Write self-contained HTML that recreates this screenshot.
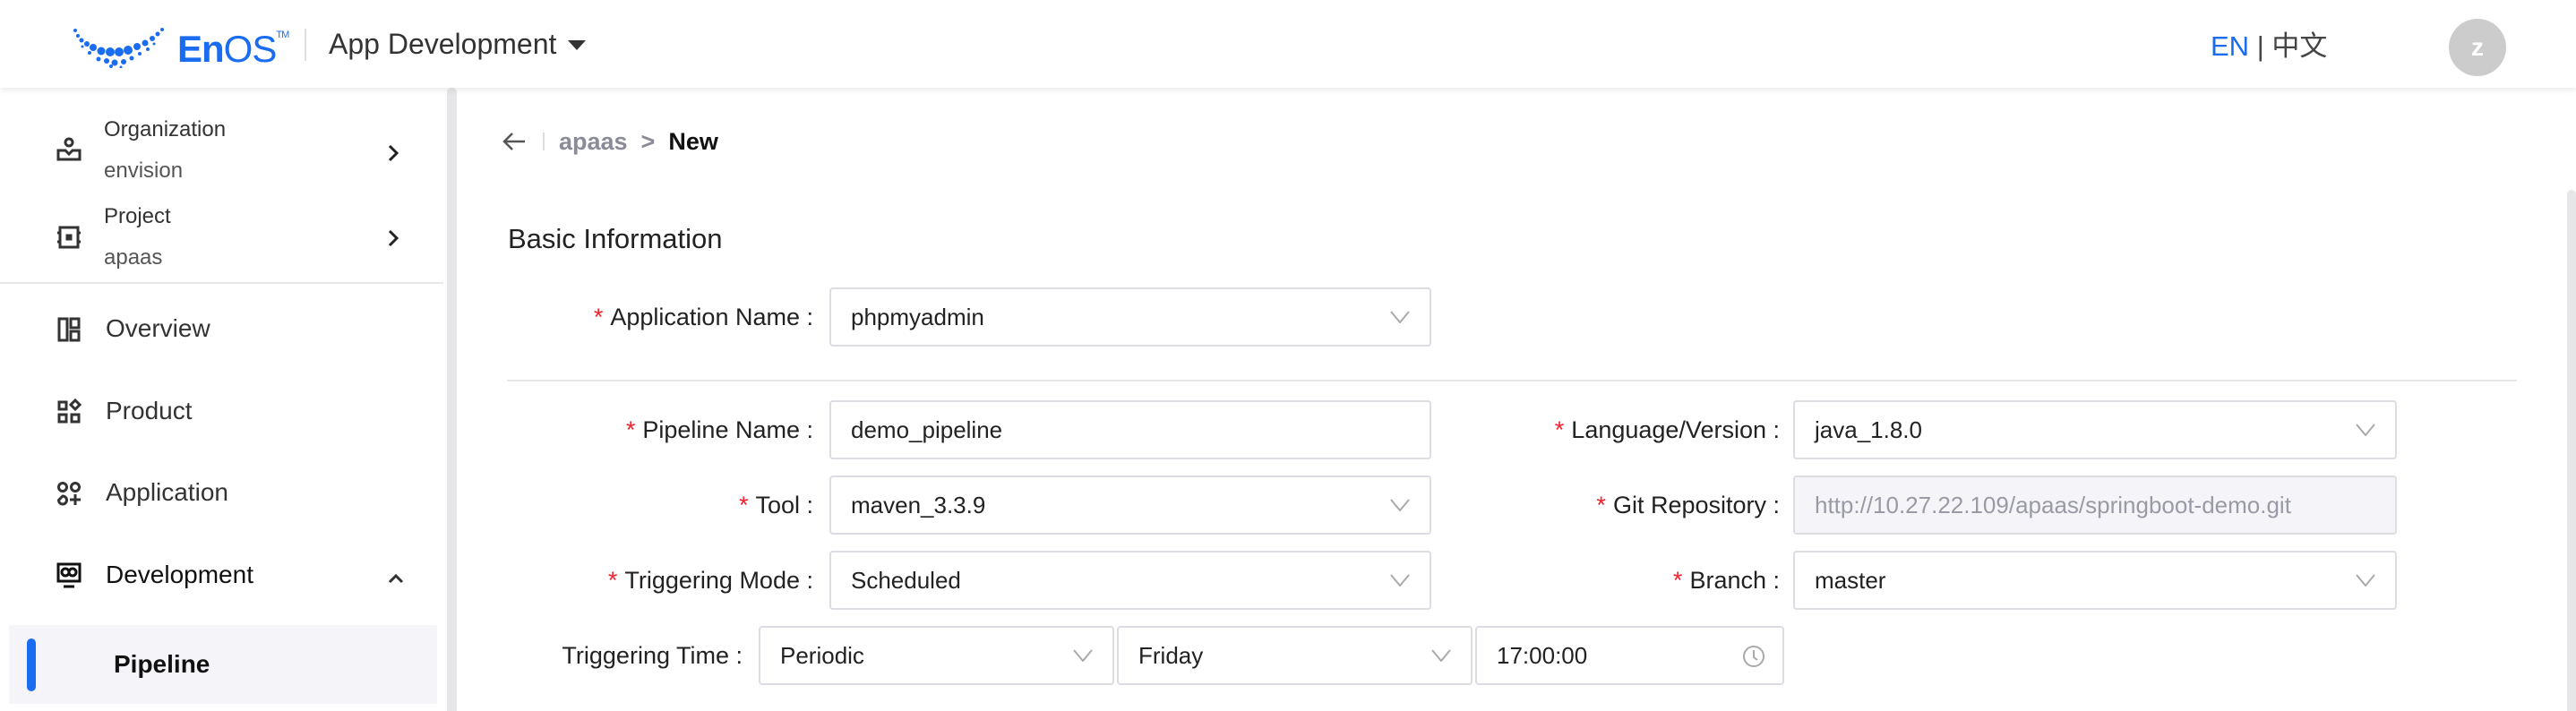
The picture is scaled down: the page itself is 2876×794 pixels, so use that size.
<!DOCTYPE html>
<html><head><meta charset="utf-8"><style>
*{margin:0;padding:0;box-sizing:border-box}
body{width:2876px;height:794px;overflow:hidden;background:#fff;font-family:"Liberation Sans","Noto Sans CJK SC",sans-serif;color:#222;position:relative}
.abs{position:absolute}
#hdr{left:0;top:0;width:2876px;height:98px;background:#fff;box-shadow:0 3px 6px rgba(0,0,0,.08);z-index:5}
#side{left:0;top:98px;width:498px;height:696px;background:#fff}
#sb{left:499px;top:98px;width:11px;height:696px;background:#e6e6e8;border-radius:5px 5px 0 0}
#sb2{left:2866px;top:212px;width:10px;height:582px;background:#e6e6e8;border-radius:5px 5px 0 0}
.t{position:absolute;white-space:nowrap;line-height:1}
.lbl{position:absolute;font-size:27px;line-height:1;white-space:nowrap;text-align:right;color:#222}
.lbl b{color:#f5222d;font-weight:normal;margin-right:8px}
.box{position:absolute;height:66px;border:2px solid #dcdce3;border-radius:4px;background:#fff;font-size:26px;line-height:62px;padding-left:22px;color:#222;white-space:nowrap}
.chev{position:absolute;right:22px;top:24px}
.si{position:absolute;left:62px}
</style></head><body>
<div id="hdr" class="abs">
  <svg class="abs" style="left:80px;top:30px" width="108" height="46" viewBox="0 0 108 46">
    <g fill="#1a6cf0">
      <circle cx="4" cy="4" r="2"/><circle cx="7" cy="10" r="2"/><circle cx="11" cy="15" r="2.5"/><circle cx="17" cy="19" r="3"/><circle cx="24" cy="23" r="4"/><circle cx="33" cy="27" r="4.5"/><circle cx="43" cy="28" r="5"/><circle cx="53" cy="28" r="5"/><circle cx="63" cy="26" r="5"/><circle cx="73" cy="22" r="4"/><circle cx="82" cy="18" r="3.5"/><circle cx="90" cy="13" r="3"/><circle cx="96" cy="8" r="2.5"/><circle cx="101" cy="3" r="2"/>
      <circle cx="30" cy="36" r="2.5"/><circle cx="39" cy="38" r="3"/><circle cx="48" cy="40" r="3.5"/><circle cx="58" cy="39" r="3"/><circle cx="67" cy="35" r="2.5"/><circle cx="76" cy="30" r="2"/><circle cx="85" cy="25" r="2"/><circle cx="20" cy="29" r="2"/><circle cx="44" cy="44" r="2"/><circle cx="55" cy="45" r="1.5"/><circle cx="12" cy="22" r="1.5"/><circle cx="92" cy="19" r="1.5"/>
    </g>
  </svg>
  <div class="t" style="left:198px;top:34px;font-size:42px;color:#1a6cf0;font-weight:bold;letter-spacing:-1px">En<span style="font-weight:normal">OS</span><span style="font-size:11px;vertical-align:top;font-weight:normal">TM</span></div>
  <div class="abs" style="left:340px;top:32px;width:2px;height:36px;background:#e0e0e0"></div>
  <div class="t" style="left:367px;top:33px;font-size:32px;color:#333">App Development</div>
  <svg class="abs" style="left:634px;top:45px" width="20" height="12"><path d="M0 0H20L10 11Z" fill="#333"/></svg>
  <div class="t" style="left:2468px;top:36px;font-size:31px;color:#444"><span style="color:#1a6cf0">EN</span> | 中文</div>
  <div class="abs" style="left:2734px;top:21px;width:64px;height:64px;border-radius:50%;background:#ccc;color:#fff;font-size:28px;line-height:64px;text-align:center;font-weight:bold">z</div>
</div>
<div id="side" class="abs">
  <svg class="si" style="top:54px" width="30" height="30" viewBox="0 0 30 30" fill="none" stroke="#333" stroke-width="3"><circle cx="15" cy="7" r="4"/><path d="M3 16h8l4 4 4-4h8v10H3z"/></svg>
  <div class="t" style="left:116px;top:35px;font-size:24px;color:#333">Organization</div>
  <div class="t" style="left:116px;top:81px;font-size:24px;color:#555">envision</div>
  <svg class="abs" style="left:432px;top:63px" width="14" height="20"><path d="M3 2l8 8-8 8" fill="none" stroke="#222" stroke-width="3"/></svg>
  <svg class="si" style="top:152px" width="30" height="30" viewBox="0 0 30 30" fill="none" stroke="#333" stroke-width="3"><rect x="5" y="4" width="20" height="22"/><rect x="13" y="13" width="4" height="4" fill="#333"/><path d="M2 10h3M2 20h3M25 10h3M25 20h3"/></svg>
  <div class="t" style="left:116px;top:132px;font-size:24px;color:#333">Project</div>
  <div class="t" style="left:116px;top:178px;font-size:24px;color:#555">apaas</div>
  <svg class="abs" style="left:432px;top:158px" width="14" height="20"><path d="M3 2l8 8-8 8" fill="none" stroke="#222" stroke-width="3"/></svg>
  <div class="abs" style="left:0;top:217px;width:495px;height:2px;background:#e8e8ea"></div>
  <svg class="si" style="top:255px" width="30" height="30" viewBox="0 0 30 30" fill="none" stroke="#333" stroke-width="3"><rect x="4" y="3" width="9" height="24"/><rect x="17" y="3" width="9" height="10"/><rect x="17" y="17" width="9" height="10"/></svg>
  <div class="t" style="left:118px;top:255px;font-size:28px;color:#333">Overview</div>
  <svg class="si" style="top:347px" width="30" height="30" viewBox="0 0 30 30" fill="none" stroke="#333" stroke-width="3"><rect x="4" y="4" width="8" height="8"/><rect x="4" y="18" width="8" height="8"/><rect x="18" y="18" width="8" height="8"/><path d="M22 2l5 5-5 5-5-5z"/></svg>
  <div class="t" style="left:118px;top:347px;font-size:28px;color:#333">Product</div>
  <svg class="si" style="top:438px" width="30" height="30" viewBox="0 0 30 30" fill="none" stroke="#333" stroke-width="3"><circle cx="8" cy="8" r="4.5"/><circle cx="22" cy="8" r="4.5"/><path d="M8 18a4.5 4.5 0 1 1 0 9a4.5 4.5 0 0 1-4.5-4.5z"/><path d="M22 16v12M16 22h12"/></svg>
  <div class="t" style="left:118px;top:438px;font-size:28px;color:#333">Application</div>
  <svg class="si" style="top:529px" width="30" height="32" viewBox="0 0 30 32" fill="none" stroke="#111" stroke-width="3"><rect x="3" y="3" width="24" height="19"/><circle cx="11" cy="12" r="4"/><circle cx="19" cy="12" r="4"/><path d="M9 28h12"/></svg>
  <div class="t" style="left:118px;top:530px;font-size:28px;color:#111">Development</div>
  <svg class="abs" style="left:433px;top:542px" width="18" height="12"><path d="M2 10l7-7 7 7" fill="none" stroke="#333" stroke-width="3"/></svg>
  <div class="abs" style="left:10px;top:600px;width:478px;height:88px;background:#f4f4f9"></div>
  <div class="abs" style="left:30px;top:615px;width:10px;height:59px;background:#1a6cf0;border-radius:5px"></div>
  <div class="t" style="left:127px;top:630px;font-size:28px;color:#111;font-weight:bold">Pipeline</div>
</div>
<div id="sb" class="abs"></div>
<div id="sb2" class="abs"></div>
<!-- content -->
<svg class="abs" style="left:560px;top:146px" width="28" height="24"><path d="M26 12H3M12 3L3 12l9 9" fill="none" stroke="#555" stroke-width="2.5"/></svg>
<div class="abs" style="left:606px;top:148px;width:2px;height:20px;background:#ddd"></div>
<div class="t" style="left:624px;top:145px;font-size:27px;color:#8a8a99;font-weight:bold">apaas&nbsp;&nbsp;&gt;&nbsp;&nbsp;<span style="color:#111">New</span></div>
<div class="t" style="left:567px;top:251px;font-size:31px;color:#222">Basic Information</div>

<div class="lbl" style="right:1968px;top:341px"><b>*</b>Application Name :</div>
<div class="box" style="left:926px;top:321px;width:672px">phpmyadmin<svg class="chev" width="22" height="14"><path d="M1 1l10 12 10-12" fill="none" stroke="#aaa" stroke-width="2"/></svg></div>

<div class="abs" style="left:566px;top:424px;width:2244px;height:2px;background:#e6e6e8"></div>

<div class="lbl" style="right:1968px;top:467px"><b>*</b>Pipeline Name :</div>
<div class="box" style="left:926px;top:447px;width:672px">demo_pipeline</div>
<div class="lbl" style="right:1968px;top:551px"><b>*</b>Tool :</div>
<div class="box" style="left:926px;top:531px;width:672px">maven_3.3.9<svg class="chev" width="22" height="14"><path d="M1 1l10 12 10-12" fill="none" stroke="#aaa" stroke-width="2"/></svg></div>
<div class="lbl" style="right:1968px;top:635px"><b>*</b>Triggering Mode :</div>
<div class="box" style="left:926px;top:615px;width:672px">Scheduled<svg class="chev" width="22" height="14"><path d="M1 1l10 12 10-12" fill="none" stroke="#aaa" stroke-width="2"/></svg></div>

<div class="lbl" style="right:2047px;top:719px">Triggering Time :</div>
<div class="box" style="left:847px;top:699px;width:397px">Periodic<svg class="chev" width="22" height="14"><path d="M1 1l10 12 10-12" fill="none" stroke="#aaa" stroke-width="2"/></svg></div>
<div class="box" style="left:1247px;top:699px;width:397px">Friday<svg class="chev" width="22" height="14"><path d="M1 1l10 12 10-12" fill="none" stroke="#aaa" stroke-width="2"/></svg></div>
<div class="box" style="left:1647px;top:699px;width:345px">17:00:00<svg class="chev" style="top:18px;right:18px" width="28" height="28"><circle cx="14" cy="14" r="11" fill="none" stroke="#aaa" stroke-width="2"/><path d="M14 7v8l4 3" fill="none" stroke="#aaa" stroke-width="2"/></svg></div>

<div class="lbl" style="right:889px;top:467px"><b>*</b>Language/Version :</div>
<div class="box" style="left:2002px;top:447px;width:674px">java_1.8.0<svg class="chev" width="22" height="14"><path d="M1 1l10 12 10-12" fill="none" stroke="#aaa" stroke-width="2"/></svg></div>
<div class="lbl" style="right:889px;top:551px"><b>*</b>Git Repository :</div>
<div class="box" style="left:2002px;top:531px;width:674px;background:#f4f4f9;color:#9a9aa6">http://10.27.22.109/apaas/springboot-demo.git</div>
<div class="lbl" style="right:889px;top:635px"><b>*</b>Branch :</div>
<div class="box" style="left:2002px;top:615px;width:674px">master<svg class="chev" width="22" height="14"><path d="M1 1l10 12 10-12" fill="none" stroke="#aaa" stroke-width="2"/></svg></div>
</body></html>
